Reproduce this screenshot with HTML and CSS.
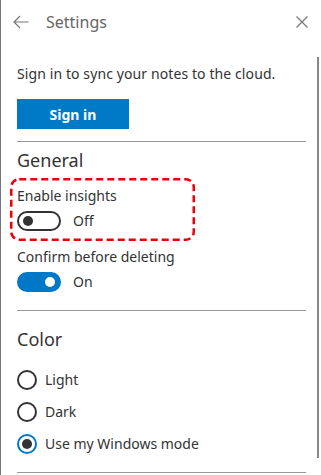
FILE: index.html
```html
<!DOCTYPE html>
<html lang="en">
<head>
    <meta charset="UTF-8">
    <meta name="viewport" content="width=device-width, initial-scale=1.0">
    <link rel="stylesheet" href="styles.css">
    <title>Settings</title>
</head>
<body>
    <div class="pane">
        <!-- top bar -->
        <div class="topbar">
            <svg class="back" width="16" height="14" viewBox="0 0 16 14">
                <path d="M15.5 7H1M7 1L1 7l6 6" fill="none" stroke="#777" stroke-width="1.2"/>
            </svg>
            <div class="ttl">Settings</div>
            <svg class="cls" width="12" height="12" viewBox="0 0 12 12">
                <path d="M0.5 0.5l11 11M11.5 0.5l-11 11" fill="none" stroke="#777" stroke-width="1.2"/>
            </svg>
        </div>

        <div class="body">
            <p class="txt intro">Sign in to sync your notes to the cloud.</p>
            <button class="sbtn">Sign in</button>
            <div class="line l1"></div>

            <div class="hed">General</div>
            <div class="mark">
                <!-- red dashed highlight -->
                <svg class="dash" width="185" height="63" viewBox="0 0 185 63">
                    <rect x="1.25" y="1.25" width="182.5" height="60.5" rx="8" fill="none" stroke="#e8000b" stroke-width="2.5" stroke-dasharray="7 4"/>
                </svg>
                <p class="txt">Enable insights</p>
                <div class="tgl-row">
                    <span class="tgl"><span class="knob"></span></span>
                    <span class="txt">Off</span>
                </div>
            </div>

            <p class="txt cnf">Confirm before deleting</p>
            <div class="tgl-row">
                <span class="tgl on"><span class="knob"></span></span>
                <span class="txt">On</span>
            </div>
            <div class="line l2"></div>

            <div class="hed hed2">Color</div>
            <div class="radios">
                <label class="rd"><span class="dot"></span><span class="txt">Light</span></label>
                <label class="rd"><span class="dot"></span><span class="txt">Dark</span></label>
                <label class="rd sel"><span class="dot"></span><span class="txt">Use my Windows mode</span></label>
            </div>
            <div class="line l3"></div>
        </div>

        <div class="sbar"></div>
    </div>
</body>
</html>
```

FILE: styles.css
```css
*{
    margin: 0;
    padding: 0;
    box-sizing: border-box;
}
body{
    width: 321px;
    height: 475px;
    overflow: hidden;
    background: #fff;
    font-family: 'Noto Sans', 'Open Sans', sans-serif;
    color: #333;
}
.pane{
    position: relative;
    height: 475px;
    border-left: 1px solid #777;
}
.topbar{
    height: 44px;
    display: flex;
    align-items: center;
    padding-left: 12px;
    padding-right: 13px;
}
.back{
    margin-right: 17px;
}
.ttl{
    flex: 1;
    font-size: 16px;
    color: #666;
    margin-top: -1px;
}
.body{
    padding: 0 15px 0 16px;
}
.txt{
    font-size: 14px;
    line-height: 20px;
    color: #333;
}
.intro{
    margin-top: 20px;
    letter-spacing: 0.1px;
}
.sbtn{
    display: block;
    margin-top: 15px;
    width: 112px;
    height: 30px;
    border: none;
    background: #007ac6;
    color: #fff;
    font-family: inherit;
    font-size: 14px;
    font-weight: bold;
}
.line{
    height: 1px;
    background: #999;
}
.l1{
    margin-top: 12px;
}
.hed{
    margin-top: 6px;
    font-size: 18px;
    line-height: 24px;
    color: #333;
}
.mark{
    position: relative;
    margin: 6px 0 0 -7px;
    width: 185px;
    height: 63px;
    padding: 8px 0 0 7px;
}
.dash{
    position: absolute;
    top: 0;
    left: 0;
}
.tgl-row{
    display: flex;
    align-items: center;
    margin-top: 5px;
}
.tgl{
    position: relative;
    display: block;
    width: 44px;
    height: 20px;
    border: 2px solid #333;
    border-radius: 10px;
    margin-right: 12px;
}
.knob{
    position: absolute;
    top: 3px;
    left: 4px;
    width: 10px;
    height: 10px;
    border-radius: 50%;
    background: #333;
}
.tgl.on{
    border-color: #0078c8;
    background: #0078c8;
}
.tgl.on .knob{
    left: auto;
    right: 4px;
    background: #fff;
}
.cnf{
    margin-top: 6px;
}
.l2{
    margin-top: 18px;
}
.hed2{
    margin-top: 16px;
}
.radios{
    margin-top: 19px;
    display: flex;
    flex-direction: column;
    gap: 12px;
}
.rd{
    display: flex;
    align-items: center;
    height: 20px;
}
.dot{
    position: relative;
    width: 20px;
    height: 20px;
    border: 2px solid #333;
    border-radius: 50%;
    margin-right: 8px;
}
.rd.sel .dot{
    border-color: #0078c8;
}
.rd.sel .dot::after{
    content: "";
    position: absolute;
    top: 3px;
    left: 3px;
    width: 10px;
    height: 10px;
    border-radius: 50%;
    background: #333;
}
.l3{
    margin-top: 18px;
}
.sbar{
    position: absolute;
    top: 57px;
    left: 316px;
    width: 2px;
    height: 401px;
    background: #888;
}
```
